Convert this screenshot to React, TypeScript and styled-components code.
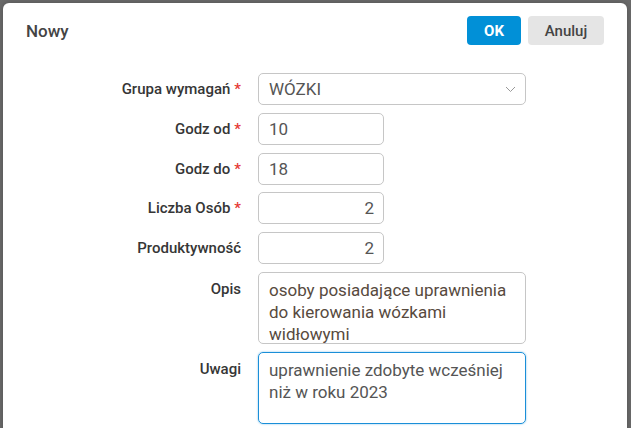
import React from "react";
import styled, { createGlobalStyle } from "styled-components";

const Global = createGlobalStyle`
  html, body { margin: 0; padding: 0; }
  body { background: #6b6b6b; font-family: Roboto, "Liberation Sans", sans-serif; }
`;

const Backdrop = styled.div`
  height: 428px;
  overflow: hidden;
  padding: 3px 4px 0 3px;
  box-sizing: border-box;
  background: #6b6b6b;
`;

const Dialog = styled.div`
  background: #fff;
  border-radius: 6px;
  height: 460px;
  box-shadow: 0 0 6px rgba(0, 0, 0, 0.25);
`;

const Header = styled.div`
  display: flex;
  align-items: center;
  justify-content: space-between;
  padding: 13px 23px 0 23px;
`;

const Title = styled.h1`
  margin: 0;
  font-size: 17px;
  font-weight: 500;
  color: #444;
`;

const Actions = styled.div`
  display: flex;
  gap: 7px;
`;

const Button = styled.button<{ $primary?: boolean }>`
  height: 29px;
  border: none;
  border-radius: 4px;
  font-family: Roboto, "Liberation Sans", sans-serif;
  font-size: 15px;
  font-weight: ${(p) => (p.$primary ? 700 : 500)};
  padding: 0;
  width: ${(p) => (p.$primary ? "54px" : "76px")};
  background: ${(p) => (p.$primary ? "#0190d7" : "#e5e5e5")};
  color: ${(p) => (p.$primary ? "#fff" : "#444")};
`;

const Form = styled.div`
  display: grid;
  grid-template-columns: 238px 268px;
  column-gap: 17px;
  row-gap: 7.75px;
  margin-top: 28px;
  align-items: center;
`;

const Label = styled.label<{ $top?: boolean }>`
  justify-self: end;
  align-self: ${(p) => (p.$top ? "start" : "center")};
  padding-top: ${(p) => (p.$top ? "8px" : "0")};
  font-size: 15px;
  font-weight: 500;
  color: #363636;
  white-space: nowrap;
`;

const Req = styled.span`
  color: #e53935;
  margin-left: 4px;
`;

const Field = styled.div<{ $width?: number }>`
  box-sizing: border-box;
  width: ${(p) => (p.$width ? `${p.$width}px` : "100%")};
  height: 32px;
  border: 1px solid #c6c6c6;
  border-radius: 5px;
  padding: 0 9px 0 10px;
  display: flex;
  align-items: center;
  justify-content: space-between;
  font-size: 17px;
  color: #555;
`;

const NumField = styled(Field)`
  justify-content: flex-end;
`;

const TextArea = styled.div<{ $focus?: boolean }>`
  box-sizing: border-box;
  width: 100%;
  height: 72px;
  border: 1px solid ${(p) => (p.$focus ? "#1a8fd8" : "#c6c6c6")};
  box-shadow: ${(p) => (p.$focus ? "0 0 2px rgba(26,143,216,0.6)" : "none")};
  border-radius: 5px;
  padding: 6px 10px;
  font-size: 17px;
  line-height: 22px;
  color: ${(p) => (p.$focus ? "#555" : "#574a3e")};
`;

const Chevron = () => (
  <svg width="11" height="7" viewBox="0 0 11 7" fill="none">
    <path d="M1 1 L5.5 5.5 L10 1" stroke="#999" strokeWidth="1" />
  </svg>
);

export default function App() {
  return (
    <>
      <Global />
      <Backdrop>
        <Dialog>
          <Header>
            <Title>Nowy</Title>
            <Actions>
              <Button $primary>OK</Button>
              <Button>Anuluj</Button>
            </Actions>
          </Header>
          <Form>
            <Label>
              Grupa wymagań<Req>*</Req>
            </Label>
            <Field>
              <span>WÓZKI</span>
              <Chevron />
            </Field>
            <Label>
              Godz od<Req>*</Req>
            </Label>
            <Field $width={126}>10</Field>
            <Label>
              Godz do<Req>*</Req>
            </Label>
            <Field $width={126}>18</Field>
            <Label>
              Liczba Osób<Req>*</Req>
            </Label>
            <NumField $width={126}>2</NumField>
            <Label>Produktywność</Label>
            <NumField $width={126}>2</NumField>
            <Label $top>Opis</Label>
            <TextArea>osoby posiadające uprawnienia do kierowania wózkami widłowymi</TextArea>
            <Label $top>Uwagi</Label>
            <TextArea $focus>uprawnienie zdobyte wcześniej niż w roku 2023</TextArea>
          </Form>
        </Dialog>
      </Backdrop>
    </>
  );
}
